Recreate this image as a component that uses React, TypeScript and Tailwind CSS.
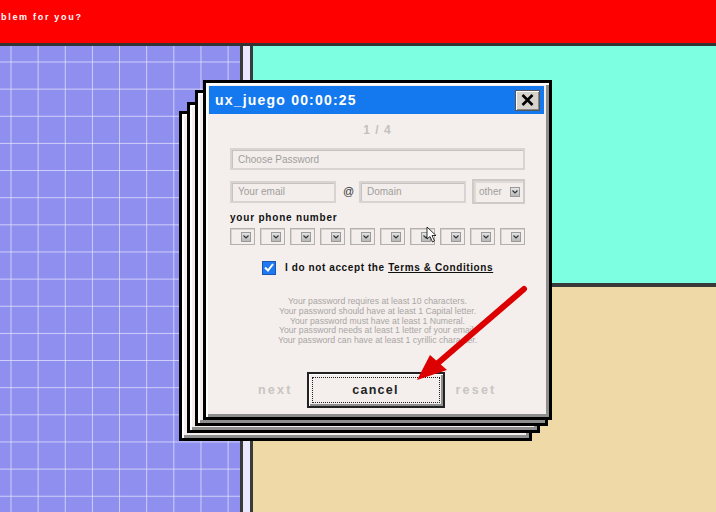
import React from "react";

const F = { fontFamily: '"Liberation Sans", Arial, sans-serif' };

function Arrow() {
  return (
    <span className="flex h-[10px] w-[10px] items-center justify-center border border-[#9a9a9a] bg-[linear-gradient(#e4e4e4,#b8b8b8)]">
      <svg width="6" height="4" viewBox="0 0 6 4">
        <path d="M0.5 0.5 L3 3 L5.5 0.5" stroke="#333" strokeWidth="1.2" fill="none" />
      </svg>
    </span>
  );
}

function Frame({ className, children }: { className: string; children?: React.ReactNode }) {
  return (
    <div
      className={
        "absolute border-[3px] border-black bg-[#f4efed] py-[3px] pl-[3px] pr-[5px] shadow-[inset_2px_2px_0_#ffffff,inset_-3px_-3px_0_#8e8e8e] " +
        className
      }
    >
      {children}
    </div>
  );
}

export default function App() {
  const rules = [
    "Your password requires at least 10 characters.",
    "Your password should have at least 1 Capital letter.",
    "Your password must have at least 1 Numeral.",
    "Your password needs at least 1 letter of your email.",
    "Your password can have at least 1 cyrillic character.",
  ];
  return (
    <div className="relative flex h-[512px] w-[716px] flex-col overflow-hidden bg-[#8f8fef]" style={F}>
      <div className="flex h-[46px] shrink-0 items-start border-b-[3px] border-[#333] bg-[#ff0000] pl-[1px] pt-[11px]">
        <span className="text-[9px] font-bold leading-[12px] tracking-[1.7px] text-white">blem for you?</span>
      </div>
      <div className="flex flex-1">
        <div className="w-[240px] bg-[#8f8fef] bg-[linear-gradient(to_right,rgba(235,235,255,0.7)_1px,transparent_1px),linear-gradient(to_bottom,rgba(235,235,255,0.7)_1px,transparent_1px)] bg-[size:27.15px_27.15px] bg-[position:10.5px_15.5px]" />
        <div className="w-[13px] border-x-[3px] border-[#3a3a3a] bg-[#e9e8ff]" />
        <div className="flex flex-1 flex-col">
          <div className="h-[241px] border-b-[4px] border-[#3a3a3a] bg-[#7dffe2]" />
          <div className="flex-1 bg-[#efd9a6]" />
        </div>
      </div>

      <Frame className="left-[179px] top-[111px] h-[330px] w-[353px]" />
      <Frame className="left-[187px] top-[102px] h-[331px] w-[353px]" />
      <Frame className="left-[195px] top-[90px] h-[336px] w-[353px]" />
      <Frame className="left-[203px] top-[80px] h-[340px] w-[349px]">
        <div className="flex h-full flex-col">
          <div className="flex h-[28px] shrink-0 items-center justify-between bg-[#1479ee] pl-[6px] pr-[4px]">
            <span className="text-[14px] font-bold tracking-[1.2px] text-white">ux_juego 00:00:25</span>
            <div className="flex h-[21px] w-[25px] items-center justify-center border border-[#555] bg-[#d6d2cc] shadow-[inset_1px_1px_0_#fff,inset_-1px_-1px_0_#888]">
              <svg width="13" height="12" viewBox="0 0 13 12">
                <path d="M1.5 1 L11.5 11 M11.5 1 L1.5 11" stroke="#000" strokeWidth="2.6" />
              </svg>
            </div>
          </div>
          <div className="flex flex-1 flex-col pl-[21px] pr-[19px]">
            <div className="mt-[9px] text-center text-[12px] font-bold leading-[14px] tracking-[1px] text-[#c4c0bd]">1 / 4</div>
            <div className="mt-[11px] flex h-[22px] items-center border-2 border-[#d9d4d1] bg-[#f3eeec] pl-[6px] text-[10px] text-[#a19d9b] shadow-[inset_1px_1px_0_#c6c2bf]">
              Choose Password
            </div>
            <div className="mt-[9px] flex items-center">
              <div className="flex h-[22px] w-[106px] items-center border-2 border-[#d9d4d1] bg-[#f3eeec] pl-[6px] text-[10px] text-[#a19d9b] shadow-[inset_1px_1px_0_#c6c2bf]">
                Your email
              </div>
              <span className="ml-[7px] w-[10px] text-[11px] text-[#333]">@</span>
              <div className="ml-[6px] flex h-[22px] w-[107px] items-center border-2 border-[#d9d4d1] bg-[#f3eeec] pl-[6px] text-[10px] text-[#a19d9b] shadow-[inset_1px_1px_0_#c6c2bf]">
                Domain
              </div>
              <div className="ml-auto flex h-[25px] w-[53px] items-center justify-between border-2 border-[#cfcac7] bg-[#f3eeec] pl-[5px] pr-[3px] text-[10px] text-[#a19d9b] shadow-[inset_2px_2px_0_#dedad7]">
                other
                <Arrow />
              </div>
            </div>
            <div className="mt-[8px] text-[10px] font-bold leading-[12px] tracking-[0.8px] text-[#111]">your phone number</div>
            <div className="mt-[4px] flex justify-between">
              {Array.from({ length: 10 }).map((_, i) => (
                <div
                  key={i}
                  className="flex h-[17px] w-[25px] items-center justify-end border border-[#b4b0ad] bg-[#f3eeec] pr-[3px] shadow-[inset_1px_1px_0_#d8d4d1]"
                >
                  <Arrow />
                </div>
              ))}
            </div>
            <div className="mt-[15px] flex items-center pl-[32px]">
              <div className="flex h-[14px] w-[14px] items-center justify-center border border-[#1a56b0] bg-[#1e78f0]">
                <svg width="10" height="9" viewBox="0 0 10 9">
                  <path d="M1 4.5 L4 7.5 L9 1" stroke="#fff" strokeWidth="2" fill="none" />
                </svg>
              </div>
              <span className="ml-[9px] text-[10px] font-bold tracking-[0.6px] text-[#111]">
                I do not accept the <span className="underline">Terms &amp; Conditions</span>
              </span>
            </div>
            <div className="mt-[22px] flex flex-col items-center text-[8.7px] leading-[9.8px] text-[#a9a5a3]">
              {rules.map((r) => (
                <div key={r}>{r}</div>
              ))}
            </div>
            <div className="mt-[26px] flex items-center">
              <span className="ml-[28px] text-[12.5px] font-bold tracking-[2.2px] text-[#c9c5c1]">next</span>
              <div className="ml-[14px] flex h-[36px] w-[138px] items-center justify-center border-2 border-[#222] bg-[#f4efed] p-[3px] shadow-[inset_1px_1px_0_#fff,inset_-2px_-2px_0_#8e8e8e]">
                <div className="flex h-full w-full items-center justify-center border border-dotted border-[#222]">
                  <span className="text-[12.5px] font-bold tracking-[1.3px] text-[#222]">cancel</span>
                </div>
              </div>
              <span className="ml-[11px] text-[12.5px] font-bold tracking-[2.2px] text-[#c9c5c1]">reset</span>
            </div>
          </div>
        </div>
      </Frame>

      <svg className="pointer-events-none absolute left-0 top-0" width="716" height="512" viewBox="0 0 716 512">
        <path d="M524 289 L438 363" stroke="#dd0000" strokeWidth="6" strokeLinecap="round" />
        <path d="M417 380 L430 355 L447 370 Z" fill="#dd0000" />
        <path d="M427 227 L427 239 L430 236.5 L432.5 242 L434.5 241 L432 235.5 L436 235.5 Z" fill="#fff" stroke="#000" strokeWidth="0.8" />
      </svg>
    </div>
  );
}
